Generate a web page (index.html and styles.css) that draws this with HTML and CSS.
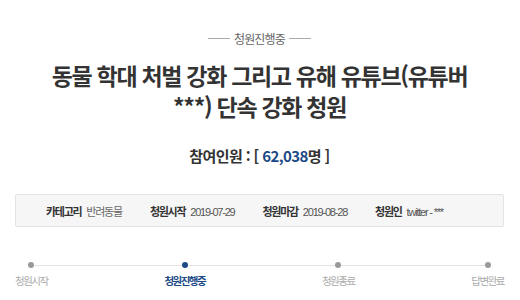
FILE: index.html
```html
<!DOCTYPE html>
<html lang="ko">
  <head>
    <meta charset="UTF-8" />
    <meta name="viewport" content="width=device-width, initial-scale=1.0" />
    <title>청원진행중 - 동물 학대 처벌 강화</title>
    <link rel="stylesheet" href="styles.css">
  </head>
  <body>
    <div class="petition">
      <div class="petition-status">
        <span class="status-line"></span>
        <span class="status-text">청원진행중</span>
        <span class="status-line"></span>
      </div>

      <h1 class="petition-title">
        동물 학대 처벌 강화 그리고 유해 유튜브(유튜버 ***) 단속 강화 청원
      </h1>

      <div class="petition-count">
        참여인원 : [ <span class="count-num">62,038</span>명 ]
      </div>

      <ul class="petition-info">
        <li><strong>카테고리</strong><span>반려동물</span></li>
        <li><strong>청원시작</strong><span class="num">2019-07-29</span></li>
        <li><strong>청원마감</strong><span class="num">2019-08-28</span></li>
        <li><strong>청원인</strong><span class="num">twitter - ***</span></li>
      </ul>

      <ol class="petition-steps">
        <li class="step"><i class="dot"></i><span>청원시작</span></li>
        <li class="step active"><i class="dot"></i><span>청원진행중</span></li>
        <li class="step"><i class="dot"></i><span>청원종료</span></li>
        <li class="step"><i class="dot"></i><span>답변완료</span></li>
      </ol>
    </div>
  </body>
</html>
```

FILE: styles.css
```css
body {
  margin: 0;
  background-color: #ffffff;
  font-family: "Noto Sans CJK KR", "Noto Sans", sans-serif;
  color: #333;
}

.petition {
  padding: 30px 16px 0 15px;
}

.petition-status {
  display: flex;
  justify-content: center;
  align-items: center;
  gap: 4px;
  height: 16px;
}

.status-line {
  width: 22px;
  height: 1px;
  background-color: #aaa;
}

.status-text {
  font-size: 12px;
  letter-spacing: -0.8px;
  color: #666;
}

.petition-title {
  margin: 14px 20px 0;
  text-align: center;
  font-size: 23px;
  letter-spacing: -1.3px;
  line-height: 31px;
  font-weight: bold;
  color: #333;
}

.petition-count {
  margin-top: 23px;
  text-align: center;
  font-size: 15px;
  letter-spacing: -0.6px;
  font-weight: bold;
  line-height: 22px;
  color: #333;
}

.count-num {
  color: #1d4a86;
}

.petition-info {
  display: flex;
  gap: 28px;
  list-style: none;
  margin: 27px 0 0;
  padding: 0 0 0 30px;
  height: 31px;
  align-items: center;
  background-color: #f6f6f6;
  border: 1px solid #e3e3e3;
  border-radius: 2px;
  font-size: 11px;
}

.petition-info li {
  display: flex;
  align-items: baseline;
  gap: 5px;
}

.petition-info strong {
  letter-spacing: -1.3px;
  color: #333;
}

.petition-info span {
  letter-spacing: -1.2px;
  color: #666;
}

.petition-info .num {
  font-family: "Liberation Sans", sans-serif;
  font-size: 11px;
  letter-spacing: -1.2px;
  color: #555;
}

.petition-steps {
  position: relative;
  display: flex;
  justify-content: space-between;
  list-style: none;
  margin: 35px 0 0;
  padding: 0;
}

.petition-steps::before {
  content: "";
  position: absolute;
  left: 16px;
  right: 16px;
  top: 3px;
  height: 1px;
  background-color: #e2e2e2;
}

.step {
  display: flex;
  flex-direction: column;
  align-items: center;
  gap: 5px;
  font-size: 10.5px;
  letter-spacing: -1.5px;
  color: #aaa;
}

.dot {
  position: relative;
  width: 6px;
  height: 6px;
  border-radius: 50%;
  background-color: #999;
}

.step.active {
  color: #1d4a86;
  font-weight: bold;
}

.step.active .dot {
  background-color: #1d4a86;
}
```
